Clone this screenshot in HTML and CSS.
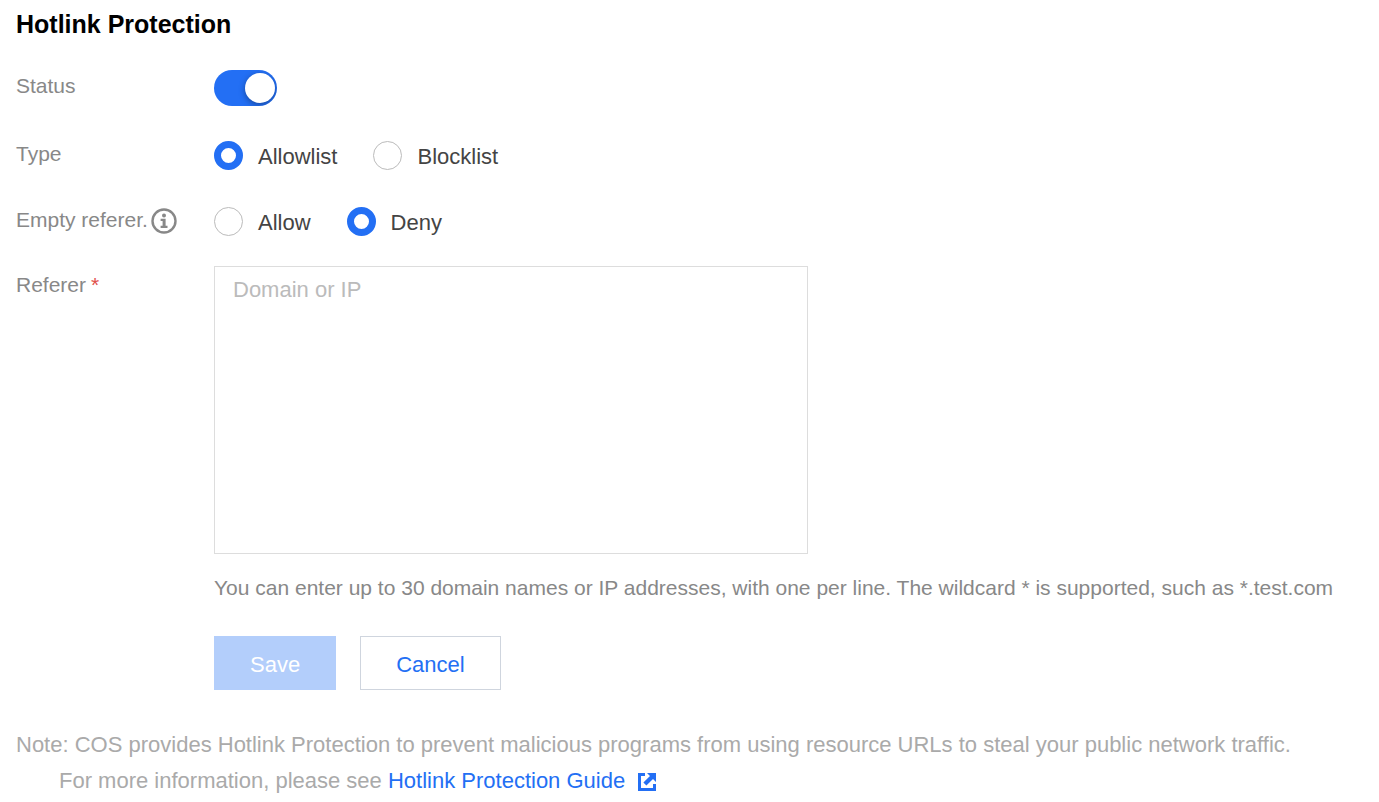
FILE: index.html
```html
<!DOCTYPE html>
<html lang="en">
<head>
    <meta charset="UTF-8">
    <meta name="viewport" content="width=device-width, initial-scale=1.0">
    <title>Hotlink Protection</title>
    <link rel="stylesheet" href="styles.css">
</head>
<body>
    <h2 class="title">Hotlink Protection</h2>
    <form id="hotlinkForm">
        <div class="form-row">
            <label class="form-label" for="status">Status</label>
            <input type="checkbox" role="switch" id="status" name="status" class="switch" checked>
        </div>

        <div class="form-row" role="radiogroup" aria-labelledby="typeLabel">
            <span class="form-label" id="typeLabel">Type</span>
            <div class="radio-group">
                <label class="radio"><input type="radio" name="type" value="allowlist" checked><span>Allowlist</span></label>
                <label class="radio"><input type="radio" name="type" value="blocklist"><span>Blocklist</span></label>
            </div>
        </div>

        <div class="form-row form-row-tight" role="radiogroup" aria-labelledby="emptyLabel">
            <span class="form-label" id="emptyLabel">Empty referer.<svg class="info-icon" viewBox="0 0 26 26" aria-hidden="true">
                <circle cx="13" cy="13" r="11.5" fill="none" stroke="currentColor" stroke-width="2.4"/>
                <circle cx="13" cy="7.6" r="2" fill="currentColor"/>
                <path d="M9.6 10.8h5v7h1.9v2.1H9.6v-2.1h2v-4.9h-2z" fill="currentColor"/>
            </svg></span>
            <div class="radio-group">
                <label class="radio"><input type="radio" name="empty" value="allow"><span>Allow</span></label>
                <label class="radio"><input type="radio" name="empty" value="deny" checked><span>Deny</span></label>
            </div>
        </div>

        <div class="form-row">
            <label class="form-label form-label-area" for="referer">Referer <span class="required">*</span></label>
            <div class="field">
                <textarea id="referer" name="referer" placeholder="Domain or IP"></textarea>
                <p class="help">You can enter up to 30 domain names or IP addresses, with one per line. The wildcard * is supported, such as *.test.com</p>
                <div class="buttons">
                    <button type="submit" class="btn btn-save" disabled>Save</button>
                    <button type="button" class="btn btn-cancel">Cancel</button>
                </div>
            </div>
        </div>
    </form>

    <div class="note">
        <p>Note: COS provides Hotlink Protection to prevent malicious programs from using resource URLs to steal your public network traffic.</p>
        <p class="note-more">For more information, please see <a href="#">Hotlink Protection Guide<svg class="link-icon" viewBox="0 0 18 18" aria-hidden="true">
            <path d="M0 0h7v3H3v12h12v-4h3v7H0z" fill="currentColor"/>
            <path d="M9 0h9v9l-3-3-6.6 6.6-3-3L12 3z" fill="currentColor"/>
        </svg></a></p>
    </div>
</body>
</html>
```
FILE: styles.css
```css
* {
    box-sizing: border-box;
}
body {
    margin: 0;
    padding: 8px 0 0 16px;
    background-color: #fff;
    color: #444;
    font-family: "Liberation Sans", Arial, sans-serif;
    font-size: 22px;
    line-height: 32px;
}
p {
    margin: 0;
}
.title {
    margin: 0 0 30px;
    color: #000;
    font-size: 25px;
    line-height: 32px;
}
.form-row {
    display: grid;
    grid-template-columns: 198px 1fr;
    align-items: start;
    margin-bottom: 32px;
}
.form-row-tight {
    margin-bottom: 28px;
}
.form-label {
    display: flex;
    align-items: center;
    color: #888;
    font-size: 21px;
}
.form-label-area {
    gap: 5px;
    padding-top: 3px;
}
.required {
    color: #e1504a;
}
.info-icon {
    width: 26px;
    height: 26px;
    margin: 2px 0 0 3px;
}

/* switch */
.switch {
    appearance: none;
    display: flex;
    align-items: center;
    width: 63px;
    height: 36px;
    margin: 0;
    padding: 0 2px;
    border-radius: 18px;
    background-color: #bbb;
    overflow: hidden;
    cursor: pointer;
}
.switch::before {
    content: "";
    width: 30px;
    height: 30px;
    border-radius: 50%;
    background-color: #fff;
    box-shadow: 0 2px 6px rgba(0, 0, 0, 0.35);
}
.switch:checked {
    justify-content: flex-end;
    background-color: #236ff4;
}

/* radios */
.radio-group {
    display: flex;
    gap: 36px;
}
.radio {
    display: flex;
    align-items: center;
    gap: 15px;
    height: 34px;
    cursor: pointer;
}
.radio span {
    padding-top: 4px;
}
.radio input {
    appearance: none;
    width: 29px;
    height: 29px;
    margin: 0;
    border: 1px solid #bbb;
    border-radius: 50%;
    background-color: #fff;
}
.radio input:checked {
    border: 7px solid #236ff4;
}

.field {
    min-width: 0;
}
textarea {
    display: block;
    width: 594px;
    max-width: 100%;
    height: 288px;
    padding: 7px 18px;
    border: 1px solid #ddd;
    color: #444;
    font: inherit;
    resize: none;
    outline: none;
}
textarea::placeholder {
    color: #bbb;
}
.help {
    margin-top: 18px;
    color: #888;
    font-size: 21px;
}
.buttons {
    display: flex;
    gap: 24px;
    margin-top: 32px;
}
.btn {
    height: 54px;
    padding: 4px 35px 0;
    border: 1px solid #cfd5de;
    background-color: #fff;
    color: #236ff4;
    font: inherit;
    cursor: pointer;
}
.btn-save {
    border-color: #b3cefb;
    background-color: #b3cefb;
    color: #fff;
    cursor: default;
}

.note {
    margin-top: 37px;
    color: #aaa;
    line-height: 36px;
}
.note-more {
    padding-left: 43px;
}
.note a {
    color: #236ff4;
    text-decoration: none;
}
.link-icon {
    width: 18px;
    height: 18px;
    margin-left: 13px;
    vertical-align: -3px;
}
```
